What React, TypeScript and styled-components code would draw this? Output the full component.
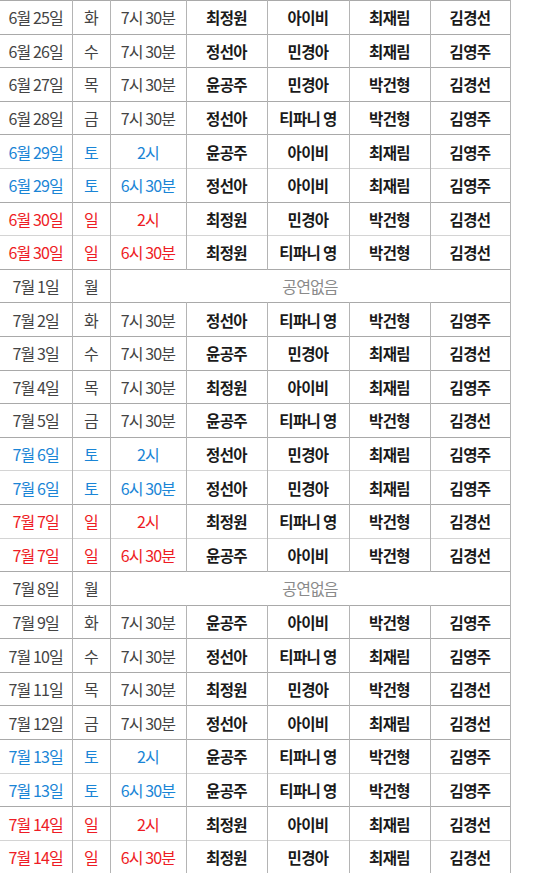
import styled, { createGlobalStyle } from "styled-components";

type Tone = "plain" | "sat" | "sun";

type Show = {
  date: string;
  day: string;
  time?: string;
  cast?: string[];
  tone: Tone;
};

const shows: Show[] = [
  { date: "6월 25일", day: "화", time: "7시 30분", cast: ["최정원", "아이비", "최재림", "김경선"], tone: "plain" },
  { date: "6월 26일", day: "수", time: "7시 30분", cast: ["정선아", "민경아", "최재림", "김영주"], tone: "plain" },
  { date: "6월 27일", day: "목", time: "7시 30분", cast: ["윤공주", "민경아", "박건형", "김경선"], tone: "plain" },
  { date: "6월 28일", day: "금", time: "7시 30분", cast: ["정선아", "티파니 영", "박건형", "김영주"], tone: "plain" },
  { date: "6월 29일", day: "토", time: "2시", cast: ["윤공주", "아이비", "최재림", "김영주"], tone: "sat" },
  { date: "6월 29일", day: "토", time: "6시 30분", cast: ["정선아", "아이비", "최재림", "김영주"], tone: "sat" },
  { date: "6월 30일", day: "일", time: "2시", cast: ["최정원", "민경아", "박건형", "김경선"], tone: "sun" },
  { date: "6월 30일", day: "일", time: "6시 30분", cast: ["최정원", "티파니 영", "박건형", "김경선"], tone: "sun" },
  { date: "7월 1일", day: "월", tone: "plain" },
  { date: "7월 2일", day: "화", time: "7시 30분", cast: ["정선아", "티파니 영", "박건형", "김영주"], tone: "plain" },
  { date: "7월 3일", day: "수", time: "7시 30분", cast: ["윤공주", "민경아", "최재림", "김경선"], tone: "plain" },
  { date: "7월 4일", day: "목", time: "7시 30분", cast: ["최정원", "아이비", "최재림", "김영주"], tone: "plain" },
  { date: "7월 5일", day: "금", time: "7시 30분", cast: ["윤공주", "티파니 영", "박건형", "김경선"], tone: "plain" },
  { date: "7월 6일", day: "토", time: "2시", cast: ["정선아", "민경아", "최재림", "김영주"], tone: "sat" },
  { date: "7월 6일", day: "토", time: "6시 30분", cast: ["정선아", "민경아", "최재림", "김영주"], tone: "sat" },
  { date: "7월 7일", day: "일", time: "2시", cast: ["최정원", "티파니 영", "박건형", "김경선"], tone: "sun" },
  { date: "7월 7일", day: "일", time: "6시 30분", cast: ["윤공주", "아이비", "박건형", "김경선"], tone: "sun" },
  { date: "7월 8일", day: "월", tone: "plain" },
  { date: "7월 9일", day: "화", time: "7시 30분", cast: ["윤공주", "아이비", "박건형", "김영주"], tone: "plain" },
  { date: "7월 10일", day: "수", time: "7시 30분", cast: ["정선아", "티파니 영", "최재림", "김영주"], tone: "plain" },
  { date: "7월 11일", day: "목", time: "7시 30분", cast: ["최정원", "민경아", "박건형", "김경선"], tone: "plain" },
  { date: "7월 12일", day: "금", time: "7시 30분", cast: ["정선아", "아이비", "최재림", "김경선"], tone: "plain" },
  { date: "7월 13일", day: "토", time: "2시", cast: ["윤공주", "티파니 영", "박건형", "김영주"], tone: "sat" },
  { date: "7월 13일", day: "토", time: "6시 30분", cast: ["윤공주", "티파니 영", "박건형", "김영주"], tone: "sat" },
  { date: "7월 14일", day: "일", time: "2시", cast: ["최정원", "아이비", "최재림", "김경선"], tone: "sun" },
  { date: "7월 14일", day: "일", time: "6시 30분", cast: ["최정원", "민경아", "최재림", "김경선"], tone: "sun" },
];

const columnWidths = [72, 38, 76, 81, 82, 81, 80];

const toneColor: Record<Tone, string> = {
  plain: "#444444",
  sat: "#1a85d6",
  sun: "#ee1c25",
};

const GlobalStyle = createGlobalStyle`
  html, body {
    margin: 0;
    padding: 0;
    background: #ffffff;
  }
  body {
    font-family: "Noto Sans CJK KR", "Noto Sans", sans-serif;
  }
`;

const Table = styled.table`
  width: 510px;
  border-collapse: collapse;
  table-layout: fixed;
  font-size: 16px;
  letter-spacing: -0.9px;
`;

const Col = styled.col<{ $w: number }>`
  width: ${(p) => p.$w}px;
`;

const Row = styled.tr<{ $sameDate: boolean }>`
  height: 33.6px;
  border-top: 1px solid ${(p) => (p.$sameDate ? "#d4d4d4" : "#a9a9a9")};
`;

const Cell = styled.td<{ $tone?: Tone }>`
  padding: 0;
  text-align: center;
  vertical-align: middle;
  white-space: nowrap;
  border-right: 1px solid #b4b4b4;
  color: ${(p) => (p.$tone ? toneColor[p.$tone] : "#444444")};
`;

const NameCell = styled(Cell)`
  color: #1a1a1a;
  font-weight: 700;
  letter-spacing: -0.6px;
  font-size: 15.5px;
`;

const NoShow = styled(Cell)`
  color: #8a8a8a;
`;

const App = () => {
  return (
    <>
      <GlobalStyle />
      <Table>
        <colgroup>
          {columnWidths.map((w, i) => (
            <Col key={i} $w={w} />
          ))}
        </colgroup>
        <tbody>
          {shows.map((s, i) => (
            <Row key={i} $sameDate={i > 0 && shows[i - 1].date === s.date}>
              <Cell $tone={s.tone}>{s.date}</Cell>
              <Cell $tone={s.tone}>{s.day}</Cell>
              {s.cast ? (
                <>
                  <Cell $tone={s.tone}>{s.time}</Cell>
                  {s.cast.map((name, j) => (
                    <NameCell key={j}>{name}</NameCell>
                  ))}
                </>
              ) : (
                <NoShow colSpan={5}>공연없음</NoShow>
              )}
            </Row>
          ))}
        </tbody>
      </Table>
    </>
  );
};

export default App;
